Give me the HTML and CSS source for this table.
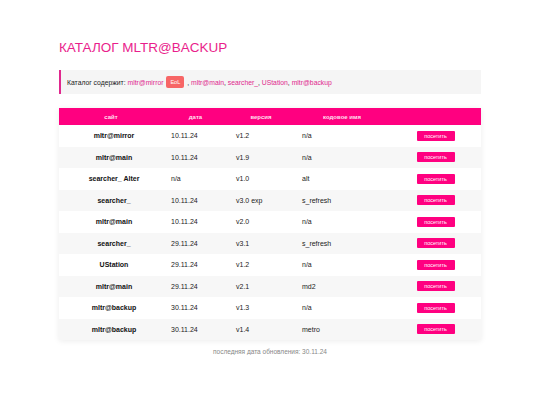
FILE: index.html
```html
<!DOCTYPE html>
<html lang="ru">
<head>
<meta charset="utf-8">
<title>Каталог mltr@backup</title>
<link rel="stylesheet" href="styles.css">
</head>
<body>
<div class="page">
  <h1 class="title">КАТАЛОГ MLTR@BACKUP</h1>
  <div class="info"><span class="info-label">Каталог содержит:&nbsp;</span><a class="link">mltr@mirror</a><span class="badge">EoL</span><span class="rest">, <a class="link">mltr@main</a>, <a class="link">searcher_</a>, <a class="link">UStation</a>, <a class="link">mltr@backup</a></span></div>
  <table class="catalog">
    <colgroup>
      <col class="c1"><col class="c2"><col class="c3"><col class="c4"><col class="c5">
    </colgroup>
    <thead>
      <tr><th>сайт</th><th>дата</th><th>версия</th><th>кодовое имя</th><th></th></tr>
    </thead>
    <tbody>
      <tr><td class="name">mltr@mirror</td><td>10.11.24</td><td>v1.2</td><td>n/a</td><td class="act"><button class="visit">посетить</button></td></tr>
      <tr><td class="name">mltr@main</td><td>10.11.24</td><td>v1.9</td><td>n/a</td><td class="act"><button class="visit">посетить</button></td></tr>
      <tr><td class="name">searcher_ Alter</td><td>n/a</td><td>v1.0</td><td>alt</td><td class="act"><button class="visit">посетить</button></td></tr>
      <tr><td class="name">searcher_</td><td>10.11.24</td><td>v3.0 exp</td><td>s_refresh</td><td class="act"><button class="visit">посетить</button></td></tr>
      <tr><td class="name">mltr@main</td><td>10.11.24</td><td>v2.0</td><td>n/a</td><td class="act"><button class="visit">посетить</button></td></tr>
      <tr><td class="name">searcher_</td><td>29.11.24</td><td>v3.1</td><td>s_refresh</td><td class="act"><button class="visit">посетить</button></td></tr>
      <tr><td class="name">UStation</td><td>29.11.24</td><td>v1.2</td><td>n/a</td><td class="act"><button class="visit">посетить</button></td></tr>
      <tr><td class="name">mltr@main</td><td>29.11.24</td><td>v2.1</td><td>md2</td><td class="act"><button class="visit">посетить</button></td></tr>
      <tr><td class="name">mltr@backup</td><td>30.11.24</td><td>v1.3</td><td>n/a</td><td class="act"><button class="visit">посетить</button></td></tr>
      <tr><td class="name">mltr@backup</td><td>30.11.24</td><td>v1.4</td><td>metro</td><td class="act"><button class="visit">посетить</button></td></tr>
    </tbody>
  </table>
  <p class="footer">последняя дата обновления: 30.11.24</p>
</div>
</body>
</html>
```

FILE: styles.css
```css
body {
  margin: 0;
  background: #ffffff;
  font-family: "Liberation Sans", Arial, sans-serif;
  color: #222222;
}

.page {
  width: 422px;
  margin: 0 auto;
  padding-top: 40px;
}

.title {
  margin: 0 0 14px;
  font-size: 13.5px;
  line-height: 16px;
  font-weight: normal;
  color: #e91e8c;
}

.info {
  display: flex;
  align-items: center;
  height: 24px;
  padding: 0 6px;
  background: #f5f5f5;
  border-left: 2px solid #e0288e;
  font-size: 6.8px;
  color: #222222;
  white-space: pre;
}

.link {
  color: #e0288e;
}

.badge {
  display: inline-block;
  margin: 0 3px;
  padding: 0 4px;
  height: 12px;
  line-height: 12px;
  background: #f76666;
  color: #ffffff;
  font-size: 5.5px;
  border-radius: 2px;
}

.catalog {
  width: 100%;
  margin-top: 14px;
  border-collapse: collapse;
  box-shadow: 0 1px 6px rgba(0, 0, 0, 0.08);
}

.c1 { width: 104px; }
.c2 { width: 65px; }
.c3 { width: 66px; }
.c4 { width: 96px; }
.c5 { width: 91px; }

.catalog th {
  height: 17px;
  padding: 0;
  background: #ff0080;
  color: rgba(255, 255, 255, 0.9);
  font-size: 6px;
  font-weight: bold;
  text-align: center;
}

.catalog td {
  height: 21.5px;
  padding: 0 8px;
  font-size: 7px;
  color: #222222;
  text-align: left;
}

.catalog tbody tr:nth-child(even) td {
  background: #f7f7f7;
}

.catalog tbody tr:nth-child(odd) td {
  background: #ffffff;
}

.catalog td.name {
  padding: 0 8px 0 14px;
  text-align: center;
  font-weight: bold;
  color: #111111;
}

.catalog td.act {
  text-align: center;
  padding: 0;
}

.visit {
  width: 38px;
  height: 10px;
  padding: 0;
  border: none;
  border-radius: 1px;
  background: #ff0080;
  color: #ffffff;
  font-family: "Liberation Sans", Arial, sans-serif;
  font-size: 5.5px;
  line-height: 10px;
  vertical-align: middle;
}

.footer {
  margin: 8px 0 0;
  text-align: center;
  font-size: 6.5px;
  color: #888888;
}
```
